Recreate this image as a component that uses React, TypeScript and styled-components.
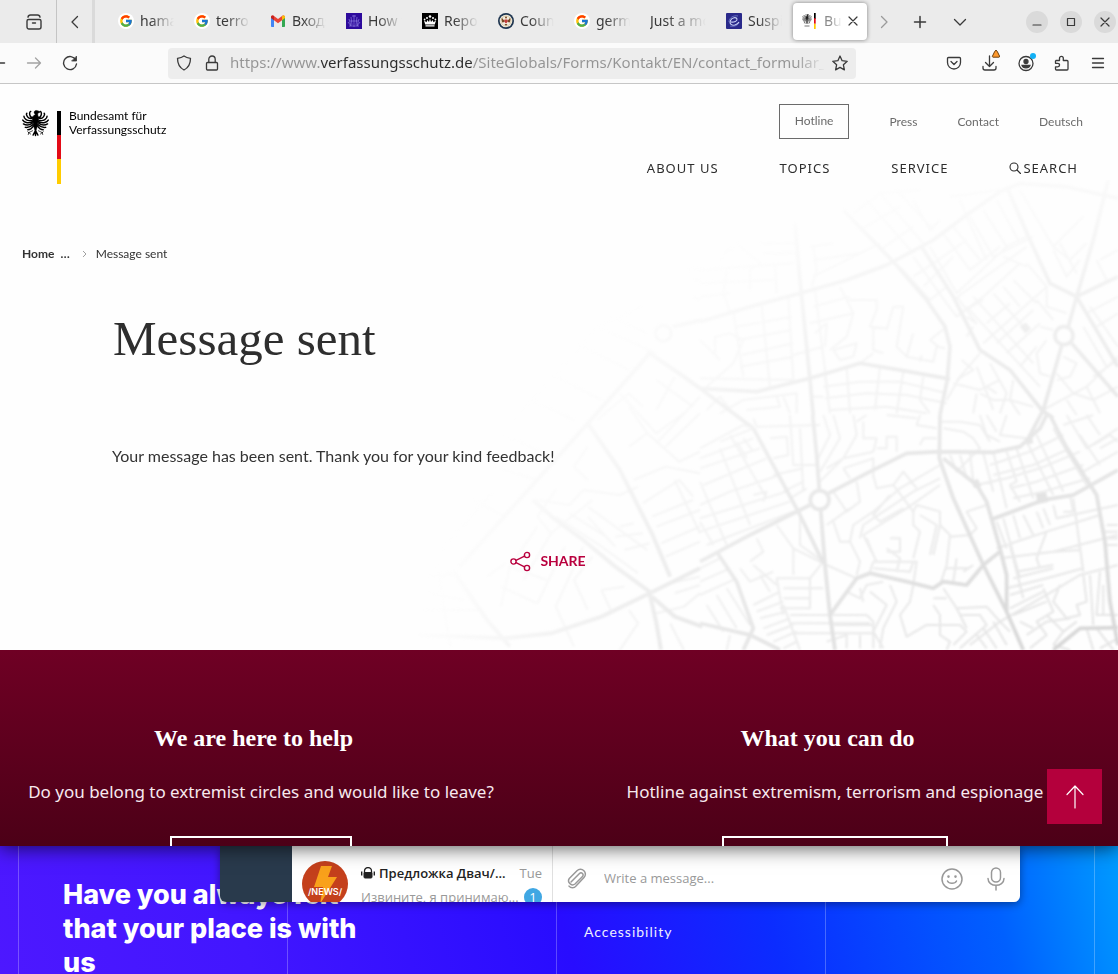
import React from 'react';
import styled, { createGlobalStyle, css } from 'styled-components';
import { FcGoogle } from 'react-icons/fc';

const ui = '"Noto Sans", "Open Sans", sans-serif';
const humanist = 'Lato, "Open Sans", sans-serif';
const serif = '"Liberation Serif", serif';

const GlobalStyle = createGlobalStyle`
  * { box-sizing: border-box; }
  body { margin: 0; font-family: ${ui}; }
  h1, h2, p, ul, ol { margin: 0; padding: 0; }
  ul, ol { list-style: none; }
  a { color: inherit; text-decoration: none; }
  button { font: inherit; color: inherit; border: 0; padding: 0; background: none; cursor: pointer; }
  svg { display: block; flex: none; }
`;

const Desktop = styled.div`
  display: flex;
  flex-direction: column;
  height: 100vh;
  overflow: hidden;
`;

const BrowserWindow = styled.div`
  position: relative;
  z-index: 2;
  flex: none;
  background: #fefefe;
  box-shadow: 0 2px 18px rgba(0, 0, 0, 0.65);
`;

/* ---------- tab strip ---------- */

const TabStrip = styled.div`
  display: flex;
  align-items: center;
  height: 43px;
  background: #ebebeb;
  color: #3a3a3a;
`;

const IconButton = styled.button<{ $w?: number; $dim?: boolean }>`
  display: flex;
  align-items: center;
  justify-content: center;
  flex: none;
  width: ${(p) => p.$w ?? 36}px;
  height: 32px;
  opacity: ${(p) => (p.$dim ? 0.45 : 1)};
`;

const StripStart = styled.div`
  display: flex;
  align-items: center;
  align-self: stretch;
  padding-left: 12px;
  border-right: 1px solid #c4c4c4;
`;

const SoftDivider = styled.div`
  align-self: stretch;
  width: 3px;
  margin-right: 13px;
  background: #dadada;
`;

const TabList = styled.div`
  display: flex;
  flex: none;
  padding-bottom: 1px;
`;

const Tab = styled.button<{ $active?: boolean }>`
  display: flex;
  align-items: center;
  gap: 6px;
  width: 74px;
  height: 37px;
  margin: 0 1px;
  padding: 0 9px;
  border-radius: 4px;
  font-size: 14px;
  line-height: 20px;
  text-align: left;
  overflow: hidden;
  ${(p) =>
    p.$active &&
    css`
      background: #ffffff;
      box-shadow: 0 0 4px rgba(0, 0, 0, 0.45);
      color: #8a8a8a;

      svg:last-child {
        color: #3a3a3a;
      }
    `}
`;

const TabTitle = styled.span`
  flex: 1;
  min-width: 0;
  overflow: hidden;
  white-space: nowrap;
  mask-image: linear-gradient(90deg, #000 30%, transparent 100%);
`;

const Spacer = styled.div`
  flex: 1;
`;

const WindowControls = styled.div`
  display: flex;
  gap: 12px;
  padding-right: 2px;
`;

const WindowButton = styled.button`
  display: grid;
  place-items: center;
  width: 22px;
  height: 22px;
  border-radius: 50%;
  background: #dadada;
`;

/* ---------- toolbar ---------- */

const Toolbar = styled.div`
  display: flex;
  align-items: center;
  height: 41px;
  border-bottom: 1px solid #c6c6c6;
  background: #fbfbfb;
  color: #3a3a3a;
`;

const NavButtons = styled.div`
  display: flex;
  width: 168px;
`;

const UrlBar = styled.div`
  display: flex;
  align-items: center;
  flex: 1;
  min-width: 0;
  height: 31px;
  padding-left: 2px;
  border-radius: 4px;
  background: #ededed;
`;

const UrlInput = styled.input`
  flex: 1;
  min-width: 0;
  height: 28px;
  margin-left: 4px;
  padding: 0 0 2px;
  border: 0;
  outline: 0;
  font: 15px ${ui};
  color: transparent;
  background: linear-gradient(
    90deg,
    #949494 0 91px,
    #2b2b2b 91px 243px,
    #949494 243px 565px,
    transparent 596px
  );
  background-clip: text;
  -webkit-background-clip: text;
`;

const ToolButtons = styled.div`
  display: flex;
  padding: 0 2px 0 80px;
`;

/* ---------- page ---------- */

const Page = styled.main`
  position: relative;
  padding-bottom: 77px;
  overflow: hidden;
  color: #333;
`;

const MapArt = styled.svg`
  position: absolute;
  right: 0;
  bottom: 0;
  width: 710px;
  height: 470px;
`;

const PageBody = styled.div`
  position: relative;
`;

const SiteHeader = styled.header`
  display: flex;
  justify-content: space-between;
  padding: 20px 35px 0 22px;
`;

const Logo = styled.a`
  display: flex;
  align-items: flex-start;
  padding-top: 5px;
  color: #000;
  font: 12px/14px ${humanist};
`;

const FlagBar = styled.span`
  width: 4px;
  height: 73px;
  margin: 2px 8px 0;
  background: linear-gradient(#000 33%, #e30b17 33% 66%, #fc0 66%);
`;

const HeaderNav = styled.div`
  display: flex;
  flex-direction: column;
  align-items: flex-end;
  gap: 18px;
`;

const MetaList = styled.ul`
  display: flex;
  align-items: center;
  gap: 40px;
  font: 12px/20px ${humanist};
  color: #6b6b6b;
`;

const HotlineLink = styled.a`
  display: block;
  padding: 6px 15px 7px;
  border: 1px solid #6b6b6b;
`;

const MainList = styled.ul`
  display: flex;
  gap: 61px;
  padding-right: 5px;
  font: 13px/22px ${ui};
  letter-spacing: 1px;
  color: #2d2d2d;
`;

const SearchLink = styled.a`
  display: flex;
  align-items: center;
  gap: 2px;
`;

const Breadcrumb = styled.ol`
  display: flex;
  align-items: center;
  gap: 8px;
  padding: 60px 22px 0;
  font: 12px/20px ${humanist};
  color: #333;

  svg {
    color: #888;
  }
`;

const CrumbLink = styled.a`
  display: flex;
  gap: 6px;
  padding-right: 4px;
  font-weight: 700;
`;

const Title = styled.h1`
  padding: 45px 113px 0;
  font: 400 49px/60px ${serif};
  color: #2e2e2e;
`;

const Message = styled.p`
  padding: 75px 112px 0;
  font: 16px/24px ${humanist};
`;

const ShareRow = styled.div`
  display: flex;
  justify-content: center;
  padding: 81px 22px 0 0;
`;

const ShareButton = styled.button`
  display: flex;
  align-items: center;
  gap: 9px;
  font: bold 14px/24px ${humanist};
  color: #b9003e;
`;

const HelpSection = styled.section`
  position: relative;
  display: grid;
  grid-template-columns: 1fr 1fr;
  gap: 52px;
  height: 196px;
  padding: 70px 22px 0 0;
  overflow: hidden;
  background: linear-gradient(#6f0024, #4c0017);
  color: #fff;
`;

const HelpColumn = styled.div`
  display: flex;
  flex-direction: column;
  align-items: center;

  h2 {
    padding-right: 15px;
    font: bold 24px/36px ${serif};
  }

  p {
    padding-top: 22px;
    font: 17px/28px ${ui};
    white-space: nowrap;
    color: #f7e9ee;
  }
`;

const OutlineLink = styled.a<{ $w: number }>`
  flex: none;
  width: ${(p) => p.$w}px;
  height: 48px;
  margin-top: 30px;
  border: 2px solid #fff;
`;

const ToTopButton = styled.button`
  position: absolute;
  right: 16px;
  bottom: 22px;
  display: grid;
  place-items: center;
  width: 55px;
  height: 55px;
  background: #b4003c;
`;

/* ---------- windows behind ---------- */

const Backdrop = styled.section`
  position: relative;
  flex: 1;
  display: flex;
  align-items: flex-start;
  padding: 32px 63px 0;
  color: #fff;
  background:
    repeating-linear-gradient(90deg, transparent 0 18px, rgba(255, 255, 255, 0.25) 18px 19px, transparent 19px 269px),
    linear-gradient(75deg, #4d18ff 0%, #4216ff 22%, #280cff 50%, #0b2cff 68%, #0060ff 88%, #009cff 100%);
`;

const Slogan = styled.p`
  flex: none;
  width: 521px;
  padding-right: 200px;
  font: 800 27px/34px Inter, sans-serif;
`;

const FooterLink = styled.a`
  padding-top: 43px;
  font: 14px/22px ${humanist};
  letter-spacing: 1px;
  color: #eef;
`;

const ChatWindow = styled.div`
  position: absolute;
  z-index: 1;
  top: 0;
  left: 220px;
  right: 98px;
  display: flex;
  height: 56px;
  overflow: hidden;
  border-radius: 0 0 6px 6px;
  background: #fff;
  box-shadow: 0 2px 8px rgba(0, 0, 0, 0.4);
  font-family: "Open Sans", sans-serif;
  font-size: 13px;
  line-height: 24px;
`;

const ChatRail = styled.div`
  flex: none;
  width: 72px;
  background: #293a4c;
`;

const ChatItem = styled.div`
  display: flex;
  flex: none;
  align-items: flex-start;
  gap: 13px;
  width: 261px;
  padding: 15px 10px 0;
  border-right: 1px solid #e0e0e0;
`;

const ChatLines = styled.div`
  flex: 1;
  min-width: 0;
`;

const ChatLine = styled.div<{ $muted?: boolean }>`
  display: flex;
  align-items: center;
  gap: 4px;
  color: ${(p) => (p.$muted ? '#999' : '#222')};
  white-space: nowrap;

  b {
    flex: 1;
    font-weight: 600;
  }

  span {
    flex: 1;
  }

  time {
    color: #999;
  }
`;

const Badge = styled.em`
  width: 18px;
  height: 18px;
  border-radius: 9px;
  background: #40a7e3;
  color: #fff;
  font-style: normal;
  line-height: 18px;
  text-align: center;
`;

const Composer = styled.div`
  display: flex;
  flex: 1;
  align-items: center;
  padding: 10px 12px 0 13px;
  color: #999;
`;

const ComposerInput = styled.input`
  flex: 1;
  min-width: 0;
  margin-left: 16px;
  padding: 0 0 2px;
  border: 0;
  outline: 0;
  font: 13px "Open Sans", sans-serif;

  &::placeholder {
    color: #999;
    opacity: 1;
  }
`;

const ComposerTools = styled.div`
  display: flex;
  gap: 20px;
`;

/* ---------- icons ---------- */

const Line = ({
  d,
  size = 16,
  w = 1.3,
  children,
}: {
  d?: string;
  size?: number;
  w?: number;
  children?: React.ReactNode;
}) => (
  <svg
    width={size}
    height={size}
    viewBox={`0 0 ${size} ${size}`}
    fill="none"
    stroke="currentColor"
    strokeWidth={w}
    strokeLinecap="round"
    strokeLinejoin="round"
    aria-hidden="true"
  >
    {d && <path d={d} />}
    {children}
  </svg>
);

const GoogleMark = () => (
  <svg width="16" height="16" viewBox="0 0 16 16" aria-hidden="true">
    <circle cx="8" cy="8" r="8" fill="#fff" />
    <FcGoogle x={1} y={1} size={14} />
  </svg>
);

const GmailMark = () => (
  <svg width="16" height="16" viewBox="0 0 16 16" aria-hidden="true">
    <path d="M1 4v9.2c0 .5.3.8.8.8H4V6z" fill="#4285f4" />
    <path d="M15 4v9.2c0 .5-.3.8-.8.8H12V6z" fill="#34a853" />
    <path d="M1 4.200C1 2.300 2.800 2 4 2.900L8 6l4-3.100c1.200-.9 3-.6 3 1.300L12 7.200 8 10.200 4 7.200z" fill="#ea4335" />
    <path d="M12 3v4.200L15 5V4c0-1.700-1.700-2-3-1z" fill="#fbbc04" />
    <path d="M4 3v4.200L1 5V4c0-1.700 1.700-2 3-1z" fill="#c5221f" />
  </svg>
);

const CrestMark = () => (
  <svg width="16" height="16" viewBox="0 0 16 16" aria-hidden="true">
    <path d="M0 0h16v16H0z" fill="#2d0a9c" />
    <path
      d="M8 2v12M5 4l1 8M11 4l-1 8M3 6l2 7M13 6l-2 7M2 9l3 4M14 9l-3 4M3 13h10M6 3h4M4 8h8"
      stroke="#8d7be0"
      strokeWidth=".7"
      fill="none"
    />
  </svg>
);

const CrownMark = () => (
  <svg width="16" height="16" viewBox="0 0 16 16" fill="#fff" aria-hidden="true">
    <path d="M0 0h16v16H0z" fill="#000" />
    <path d="M3.500 13.500h9v-1.200h-9zM3.200 11.500 2 7.500l2.600 1.800.6-2.300 1.800 2L8 5.500 9 9l1.800-2 .6 2.300L14 7.500l-1.200 4z" />
    <circle cx="8" cy="3.500" r="1.300" />
    <circle cx="5" cy="5" r="1" />
    <circle cx="11" cy="5" r="1" />
    <circle cx="2.600" cy="6.500" r=".9" />
    <circle cx="13.400" cy="6.500" r=".9" />
  </svg>
);

const SealMark = () => (
  <svg width="16" height="16" viewBox="0 0 16 16" aria-hidden="true">
    <circle cx="8" cy="8" r="8" fill="#1e3550" />
    <circle cx="8" cy="8" r="6.300" fill="#f4eee0" />
    <circle cx="8" cy="8" r="5" fill="none" stroke="#c9b98f" strokeWidth=".6" />
    <path d="M4 4.500c.3 1.500 1.500 2.500 2.700 2.700L6.500 9 4.300 9.500C3.500 8 3.300 6 4 4.500zM12 4.500c-.3 1.500-1.500 2.500-2.700 2.700L9.500 9l2.200.5C12.500 8 12.700 6 12 4.500zM6.500 11h3L8 13z" fill="#7a4a26" />
    <circle cx="8" cy="4.500" r="1" fill="#7a4a26" />
    <path d="M6.500 6.500h3V9L8 10.500 6.500 9z" fill="#c43b3b" />
  </svg>
);

const EuropolMark = () => (
  <svg width="16" height="16" viewBox="0 0 16 16" fill="none" aria-hidden="true">
    <rect width="16" height="16" rx="1" fill="#29298a" />
    <path d="M5 9c3 .5 6.500-1 6-3S6 4 4.500 7.500 6 13 9 12s4-3 4-3" stroke="#c9d2f5" strokeWidth="1.100" />
    <path d="M3 9C3 5 7 2 12 3M4 13c3 1 7 0 9-3" stroke="#7f8bd6" strokeWidth=".7" />
  </svg>
);

const EagleShape = ({ color }: { color: string }) => (
  <g fill="none" stroke={color} strokeLinecap="round">
    <path d="M14 5c-2.500-1.500-1.500-4 1-4 1.500 0 2.500 1 4 1.500-1 .8-2 .7-2.500 1.500C16 6 17 7 17 10l-1 7-2 6-2-6-1-7c0-2 .5-3 1.500-4z" fill={color} strokeWidth=".5" />
    <path d="M11 8C8 9 7 3 9 2M11 9C6 11 4 5 5 4M11 11C5 13 2 9 2 7M11 12.500C6 15 2 13 .8 11M11 14c-4 3-7 2.500-9.500 1M11.500 15.500C8 19 6 19 3.500 18.500M12 17c-2 3-4 4-6 4" strokeWidth="1.500" />
    <path d="M17 8c3 1 4-5 2-6M17 9c5 2 7-4 6-5M17 11c6 2 9-2 9-4M17 12.500c5 2.500 9 .5 10.200-1.500M17 14c4 3 7 2.500 9.500 1M16.500 15.500C20 19 22 19 24.500 18.500M16 17c2 3 4 4 6 4" strokeWidth="1.500" />
    <path d="M14 20v7M14 22l-2.500 4.500M14 22l2.500 4.500" strokeWidth="1.500" />
    <path d="M11 22l-4 2m0 0-1-1m1 1-.5 2m.5-2 2 1.500M17 22l4 2m0 0 1-1m-1 1 .5 2m-.5-2-2 1.500" strokeWidth=".7" />
  </g>
);

const BundesMark = () => (
  <svg width="16" height="16" viewBox="0 0 16 16" aria-hidden="true">
    <svg x="0" y="1" width="10" height="10" viewBox="0 0 28 28">
      <EagleShape color="#222" />
    </svg>
    <path d="M2.500 13h5" stroke="#777" strokeWidth="1.200" />
    <path d="M12 0h1.700v6H12z" fill="#000" />
    <path d="M12 5.300h1.700v5.400H12z" fill="#e30b17" />
    <path d="M12 10.700h1.700V16H12z" fill="#fc0" />
  </svg>
);

/* ---------- street map ---------- */

const westMain =
  'M40 1365 230 1375 330 1360 440 1310 545 1240 655 1165M130 1160 260 960 410 730 520 560 545 520M595 440 660 420M410 730 480 870 550 1060 590 1190M545 1240 560 1330 570 1410M545 1235 470 1160 400 1080 340 1020 290 960M550 1250 600 1310 660 1340M540 515 620 590 655 625M150 1240 190 1320 240 1400M150 1240 120 1180 60 1190';
const westMinor =
  'M60 1080 130 900 260 700 400 490M90 1110 200 940M180 850 300 900 260 960M220 760 330 830M270 650 380 720M310 570 440 660M370 480 500 570M400 490 430 440 530 380M430 440 560 520M460 410 540 460M160 960 230 1010M340 930 300 1010 330 1060 420 960M300 960 370 975 400 930 480 945 520 920M410 800 380 860 410 900M500 680 540 760 610 845 655 815M430 720 500 640 530 680M480 640 560 760 620 700M540 760 500 800M560 600 640 680M560 790 655 650M580 800 655 700M600 590 560 690M510 900 580 860 655 880M530 970 610 900 640 950M550 1010 640 960M560 1040 655 990M570 1090 655 1040M580 1130 655 1085M600 900 655 1060M340 1010 430 1090 520 1180M370 1000 450 1070M410 980 540 1110M300 1040 240 1160 220 1280M330 1060 270 1200M360 1100 300 1270M400 1100 340 1280 380 1400M420 1130 380 1200 410 1290M440 1230 490 1220M440 1230 460 1290M480 1410 520 1330 500 1290M560 1300 620 1280 655 1240M590 1210 655 1190M600 1240 655 1215M590 1330 620 1410M240 1160 320 1200M220 1220 300 1270M190 1190 230 1150M60 1240 140 1260M50 1290 170 1290M80 1150 110 1400M410 1010 470 1100M480 1040 510 1030M470 1070 530 1060M490 1110 545 1090M630 270 655 265M640 300 655 300M640 350 655 360';
const northMain =
  'M0 425 150 380 300 340 440 300 560 255 700 180 800 105 900 35 960 10 1100 20 1254 55M285 130 300 300 315 450 330 600 340 710M0 625 170 635 330 595 480 550 610 572 750 597M430 90 580 245 680 360 735 440 750 500 742 600 720 705M1254 290 1130 350 1050 310 990 180 920 20M1225 0 1180 180 1130 350 1105 440M1085 497 1030 690 985 775M1115 490 1254 650M665 200 760 350 840 510 930 570 1025 690 1060 715M1130 350 1254 560M0 625 100 700 160 745';
const northMinor =
  'M100 395 130 590M185 375 210 620M265 350 280 600M110 440 275 410M115 480 275 450M125 525 280 490M120 560 280 530M0 595 280 600M20 620 100 550 130 480 90 460M0 480 40 520 60 540M45 520V470L90 460M0 270 280 250M0 310 220 300M0 350 90 340M90 395 70 340 80 270M110 190 180 250 150 270 150 330M180 190H290M190 220H290M225 250 230 340M100 200 60 240M330 200 400 190M340 240 480 220M340 290 540 190M335 320 350 270 340 200M345 330 385 650M340 380 450 350M330 430 460 400M420 320 460 400 440 470 390 510M345 460 380 430 375 500M440 360H530V390L510 440 560 445M520 440 520 510 550 520M560 450 580 380 610 380 590 500 620 530 640 460M620 530 700 545 710 500 735 505M660 545 665 525M400 510 470 490 460 530 420 540 400 510M480 550 520 520M370 500 280 525M330 650 370 650M370 620 480 605 600 605 740 640M375 655 500 640 620 645 740 670M390 690 560 680 680 700M375 590 390 700M440 560 450 700M540 560 525 690M610 575 590 700M670 590 660 660 690 700M500 60 640 220M540 40 670 190M590 30 700 150M460 100 540 40 660 30M480 150 600 80M540 210 640 140M640 60 690 150 720 120M780 60 800 110 860 240M750 50 900 30M810 110 880 230 1000 170M850 90 920 200M890 60 960 190M930 50 1050 310M960 30 1060 200 1150 110M730 160 810 270 900 200M760 140 840 240M640 230 740 370M690 200 770 340 920 200 980 170M600 260 690 360 740 320M640 290 700 250 800 180M670 320 760 230M760 360 980 200M770 350 830 430 800 410M740 370 770 410 850 350 960 250M850 490 1040 320M820 350 1000 550M800 380 1020 620M780 400 850 360M880 340 980 450M910 320 960 380M940 300 1010 370M860 430 930 370M890 490 1000 390M920 520 1020 430M960 560 1010 500M980 250 1040 320 1040 380 1100 400M910 230 980 260M1060 200 1110 240 1160 190M1080 190 1130 280M1060 210 1100 290 1140 240M1200 240 1254 210M1190 240 1220 300M1010 360 1060 420M1040 480 1010 520 1020 580 1050 590M1060 450 1020 440M1170 380 1254 500M1160 400 1254 350M1190 440 1254 400M1150 440 1220 560 1254 540M1180 590 1254 540M1090 530 1130 550 1110 590 1070 600M1070 580 1120 640M1030 690 1160 620 1254 530M1120 640 1180 660 1254 620M1100 660 1130 705M1160 620 1200 700M840 520 780 590 740 660M785 540 820 570 770 600M760 610 840 630 900 600M830 560 880 690M870 550 920 640 900 700M830 640 820 700M840 640 880 660 930 660 1000 680M860 620 890 640M940 600 930 660 960 705M20 690 60 650 100 700M60 700 130 660 290 640V700M140 690 240 680 230 650M250 650 270 700M800 470 820 440M690 480 740 440M690 480 715 500';
const southMain =
  'M0 440 150 360 330 270M385 235 510 170 620 115 720 110 880 112 960 95 1020 40 1040 0M338 0 350 120 358 225M362 285 375 450 390 600 405 705M720 0 718 130 760 250 850 450 920 590 970 705M730 130 830 210 860 260 900 400 920 480 920 590M870 315 1030 255 1120 240 1254 165M1050 0 1100 100 1190 240 1215 380 1230 560 1254 690M390 600 470 490 510 475 620 500 700 520 730 500 800 510 850 450 900 410M0 625 150 660 240 705M50 410 110 500 160 640 130 705M160 40 230 170 300 300 370 445M1060 705 1140 640 1254 638';
const southMinor =
  'M0 100 130 30 160 40 60 80M0 130 160 70M0 160 180 100M10 210 200 130M0 270 90 230 240 180M0 310 260 230M0 350 270 260M20 390 280 290M60 100 150 330M90 60 200 250M0 200 80 390M110 80 140 130M130 70 160 110M160 240 200 230 190 260M0 320 40 390M160 10 170 35 360 30M270 0 280 150 350 150M300 40 310 230M210 70 260 65 265 120 220 130M220 180 310 160M250 230 310 200M270 250 320 220M370 0 390 60 350 140M400 0 420 70 360 170M460 0 470 60 430 130 380 160M360 200 430 130 520 110M430 160 450 190M430 160 520 130 520 190M490 20 490 70 530 70 520 110M530 100 560 100V65H590V110M660 0 650 30 710 40M660 90 670 70H710M400 230 440 290 480 260 470 200M380 330 450 280M400 320 420 380 450 380 480 440 470 480M450 380 460 330 520 290 600 220 720 150M480 370 490 330 640 230 720 190M490 360 620 280 720 210M520 180 530 220 580 210 610 170 650 220M580 210 640 290 650 270 720 290V330L750 360 740 450 720 510M640 290 640 330 660 350 640 430M690 420 710 330 660 300M720 330 700 420M610 280 540 320 520 300 570 240M490 360 530 440M500 370 520 420M520 440 650 440 640 510M510 470 520 440M520 460 630 470 640 440M570 370H600V410H560M560 400 600 430 590 470M740 460H810M770 430 760 500M790 470 820 450M750 365 810 360 830 340 800 290 860 270M380 450 470 490M370 445 280 400 280 480M300 300 300 390 370 440 330 490 230 490 250 600M250 520H370M250 550H330M240 580H330V490M270 600H500L520 620V700M270 625H510M280 655H520M380 680 440 660V700M480 660V700M400 630H520M440 530 480 550 500 510 550 500M480 520 490 560M510 530 560 570 520 650 550 700M570 510 590 560 550 640 540 700M640 510 630 560 600 600 620 665 680 630 780 630 800 650 760 690M730 520 770 580 800 640M700 550H740M700 570 720 600 720 660 750 680 740 705M770 580 860 575 900 620 930 650M780 600H840L860 630 780 700M830 660 860 700M850 640 890 700M880 620 920 690M810 690 900 620 1040 540 1140 480 1254 450M230 330 280 400M170 370 190 410 150 440M120 460 150 500 220 470M60 430 0 460M0 500 90 460M0 540 110 490M20 570 70 650M50 540 110 640M80 520 150 630M160 450 230 510M180 480 210 530M160 570 240 530M170 590 250 560M180 610 260 590M190 640 270 610M200 660 280 630M220 680 290 650M250 700 290 680M90 660 80 705M250 570 300 705M750 120 770 170 840 100 820 70 790 50 730 40M720 20H780L840 30 870 80M840 0 860 60 900 80M860 0 890 50M920 0 900 60 980 70M780 120 800 190M810 115 820 200M850 115 880 230M880 110 920 280M920 110 950 200 930 210 960 260M950 100 1000 250M980 80 1060 240M1010 60 1090 230M1060 40 1160 210M870 150 990 110 1090 60M880 180 1000 150 1110 100M830 210 920 190 1020 160 1140 110M930 220 1010 200 1150 150M940 250 1030 230 1170 190M1080 60 1150 170 1254 110M1090 30 1180 0M1100 0 1160 100 1254 40M1140 60 1200 150M1180 90 1230 60 1254 80M1200 60 1160 0M1200 100 1254 70M890 320 920 400M910 310 960 490M940 300 960 370M970 300 1000 360M1010 290 1030 340M1030 280 1050 330M1060 270 1070 310 1254 270M1090 290 1120 290 1110 240M1120 250 1150 470M890 400 1040 350 1200 300M900 430 1060 410 1254 360M1040 350 1010 430 1020 460M930 390 950 470 1060 450M940 490 1060 460M920 520 1040 490 1150 460M930 540 1030 510M950 470 970 550M1060 410 1140 405M930 580 1030 530M940 600 1040 560M1030 520 1060 590 1010 620 1040 660 990 700M960 620 1000 640M1080 510 1060 560 1100 610 1140 600 1130 570 1160 560 1150 480M1170 480 1180 630M1200 470 1190 600H1254M1210 510V600M1040 600 1090 650 1060 690M980 660 1040 620 1110 610M1160 640 1180 705M1190 640 1240 705M1200 700 1254 670M1220 330H1254M1215 350H1254M1220 370H1254M1220 390H1254M1060 690 1110 705M1090 650 1130 620M500 0 470 20M560 0 650 10';

const StreetMap = () => (
  <MapArt viewBox="408 180 710 470" aria-hidden="true">
    <defs>
      <radialGradient id="fade" gradientUnits="userSpaceOnUse" cx="1080" cy="830" r="700">
        <stop offset="0.25" stopColor="#fff" />
        <stop offset="0.5" stopColor="#fff" stopOpacity="0.66" />
        <stop offset="0.75" stopColor="#fff" stopOpacity="0.34" />
        <stop offset="1" stopColor="#fff" stopOpacity="0" />
      </radialGradient>
      <mask id="mapMask" maskUnits="userSpaceOnUse" x="400" y="170" width="730" height="490">
        <rect x="400" y="170" width="730" height="490" fill="url(#fade)" />
      </mask>
      <filter id="soft" filterUnits="userSpaceOnUse" x="400" y="170" width="740" height="500">
        <feGaussianBlur stdDeviation="0.9" />
      </filter>
    </defs>
    <g mask="url(#mapMask)">
      <g fill="none" stroke="#d6d6d6" strokeLinejoin="round" filter="url(#soft)">
        <g transform="translate(400 180) scale(0.4579 0.3333)">
          <path d={westMinor} strokeWidth="2" stroke="#e4e4e4" vectorEffect="non-scaling-stroke" />
          <path d={westMain} strokeWidth="4" vectorEffect="non-scaling-stroke" />
          <ellipse cx="575" cy="460" rx="17" ry="24" strokeWidth="3" vectorEffect="non-scaling-stroke" />
        </g>
        <g transform="translate(700 180) scale(0.3333)">
          <path d={northMinor} strokeWidth="6" stroke="#e4e4e4" />
          <path d={northMain} strokeWidth="11" />
          <circle cx="1092" cy="467" r="27" strokeWidth="11" />
          <path d="M960 440l18-12 14 18-16 14z" fill="#d6d6d6" />
        </g>
        <g transform="translate(700 415) scale(0.3333)">
          <path d={southMinor} strokeWidth="6" stroke="#e3e3e3" />
          <path d={southMain} strokeWidth="11" />
          <circle cx="359" cy="255" r="28" strokeWidth="11" />
          <path d="M1008 238l30-6 6 28-30 6zM815 200l18-8 10 22-20 4zM975 70l20-6 4 20-18 4z" fill="#d6d6d6" />
        </g>
      </g>
    </g>
  </MapArt>
);

/* ---------- data ---------- */

const tabs: { title: string; icon?: React.ReactNode }[] = [
  { title: 'hamas', icon: <GoogleMark /> },
  { title: 'terror', icon: <GoogleMark /> },
  { title: 'Входящие', icon: <GmailMark /> },
  { title: 'How to', icon: <CrestMark /> },
  { title: 'Report', icon: <CrownMark /> },
  { title: 'Count', icon: <SealMark /> },
  { title: 'germa', icon: <GoogleMark /> },
  { title: 'Just a mom' },
  { title: 'Suspi', icon: <EuropolMark /> },
];

export default function App() {
  return (
    <Desktop>
      <GlobalStyle />
      <BrowserWindow>
        <TabStrip>
          <StripStart>
            <IconButton $w={44} aria-label="Recent windows">
              <Line d="M2.500 5.500h11a1.500 1.500 0 0 1 1.500 1.500v6a2 2 0 0 1-2 2H3a2 2 0 0 1-2-2V7a1.500 1.500 0 0 1 1.500-1.500zM2 3.200A2.500 2.500 0 0 1 4.500 1h7A2.500 2.500 0 0 1 14 3.200M6.500 9h3" w={1.4} />
            </IconButton>
          </StripStart>
          <IconButton $w={35} aria-label="Scroll tabs left">
            <Line d="M10.500 2.500 5 8l5.500 5.500" />
          </IconButton>
          <SoftDivider />
          <TabList role="tablist">
            {tabs.map((t) => (
              <Tab key={t.title} role="tab">
                {t.icon}
                <TabTitle>{t.title}</TabTitle>
              </Tab>
            ))}
            <Tab $active role="tab" aria-selected="true">
              <BundesMark />
              <TabTitle>Bundes</TabTitle>
              <Line size={10} d="M1 1l8 8M9 1 1 9" w={1.2} />
            </Tab>
          </TabList>
          <IconButton $w={32} $dim aria-label="Scroll tabs right">
            <Line d="M5.500 2.500 11 8l-5.500 5.500" />
          </IconButton>
          <IconButton $w={40} aria-label="New tab">
            <Line d="M8 2.500v11M2.500 8h11" w={1.5} />
          </IconButton>
          <IconButton $w={40} aria-label="List all tabs">
            <Line d="M2.500 5.500 8 11l5.500-5.500" />
          </IconButton>
          <Spacer />
          <WindowControls>
            <WindowButton aria-label="Minimize">
              <Line size={10} d="M1 8h8" w={1.2} />
            </WindowButton>
            <WindowButton aria-label="Maximize">
              <Line size={10} d="M1.500 1.500h7v7h-7z" w={1.2} />
            </WindowButton>
            <WindowButton aria-label="Close">
              <Line size={10} d="M1 1l8 8M9 1 1 9" w={1.2} />
            </WindowButton>
          </WindowControls>
        </TabStrip>

        <Toolbar>
          <NavButtons>
            <IconButton $w={16} aria-label="Back">
              <Line d="M-4 8h8.500" w={1.5} />
            </IconButton>
            <IconButton $dim aria-label="Forward">
              <Line d="M1.500 8h13M9.500 3l5 5-5 5" />
            </IconButton>
            <IconButton aria-label="Reload">
              <Line w={1.4}>
                <path d="M13.800 5A6.500 6.500 0 1 0 14.500 9" />
                <path d="M14.500 1.500V6H10z" fill="currentColor" strokeWidth=".8" />
              </Line>
            </IconButton>
          </NavButtons>
          <UrlBar>
            <IconButton $w={28} aria-label="Tracking protection">
              <Line d="M8 1c2 1.500 4 2 6.500 2.300C14.500 9 13 12.500 8 15 3 12.500 1.500 9 1.500 3.300 4 3 6 2.500 8 1z" />
            </IconButton>
            <IconButton $w={28} aria-label="Connection secure">
              <Line d="M3.500 7.500h9a1 1 0 0 1 1 1V14a1 1 0 0 1-1 1h-9a1 1 0 0 1-1-1V8.500a1 1 0 0 1 1-1zM4.800 7.500V4.200a3.200 3.200 0 0 1 6.400 0v3.300" />
            </IconButton>
            <UrlInput
              aria-label="Address"
              defaultValue="https://www.verfassungsschutz.de/SiteGlobals/Forms/Kontakt/EN/contact_formular_en.html"
            />
            <IconButton $w={32} aria-label="Bookmark this page">
              <Line d="M8 1l2.100 4.700 5.100.6-3.800 3.500 1 5.100L8 12.400l-4.400 2.500 1-5.100L.8 6.300l5.100-.6z" />
            </IconButton>
          </UrlBar>
          <ToolButtons>
            <IconButton aria-label="Save to Pocket">
              <Line d="M2.500 2.500h11a1 1 0 0 1 1 1V7.500a6.500 6.500 0 0 1-13 0V3.500a1 1 0 0 1 1-1zM5 6.500l3 3 3-3" />
            </IconButton>
            <IconButton aria-label="Downloads">
              <svg width="20" height="26" viewBox="0 0 20 26" fill="none" stroke="currentColor" strokeWidth="1.300" strokeLinecap="round" strokeLinejoin="round">
                <path d="M9.500 6v10.500M5.500 12.500l4 4 4-4M3 16.500V18a2 2 0 0 0 2 2h9a2 2 0 0 0 2-2v-1.500" />
                <path d="M16 .5c.5 0 1 .4 1.300 1l2.200 4.500c.3.700 0 1.200-.6 1.200h-5.800c-.6 0-.9-.5-.6-1.200l2.200-4.500c.3-.6.800-1 1.300-1z" fill="#ff9a2e" stroke="#5a3000" strokeWidth=".9" />
              </svg>
            </IconButton>
            <IconButton aria-label="Account">
              <svg width="20" height="20" viewBox="0 0 20 20" fill="none" stroke="currentColor" strokeWidth="1.300">
                <circle cx="10" cy="10.500" r="7" />
                <circle cx="10" cy="8.500" r="2" fill="currentColor" />
                <path d="M6 12.300h8c-.5 1.700-2.300 2.500-4 2.500s-3.500-.8-4-2.500z" fill="currentColor" />
                <circle cx="17" cy="3" r="3" fill="#12b0f5" stroke="none" />
              </svg>
            </IconButton>
            <IconButton aria-label="Extensions">
              <Line d="M2 5.500h3.500V3.200a1.900 1.900 0 0 1 3.800 0v2.300H13a1 1 0 0 1 1 1V14a1 1 0 0 1-1 1H2.500a1 1 0 0 1-1-1v-2.200h2.300a1.700 1.700 0 0 0 0-3.500H1.500V6" />
            </IconButton>
            <IconButton aria-label="Menu">
              <Line d="M2.500 3.500h11M2.500 8h11M2.500 12.500h11" />
            </IconButton>
          </ToolButtons>
        </Toolbar>

        <Page>
          <StreetMap />
          <PageBody>
            <SiteHeader>
              <Logo href="#">
                <svg width="27" height="28" viewBox="0 0 28 28" aria-hidden="true">
                  <EagleShape color="#000" />
                </svg>
                <FlagBar />
                <span>
                  Bundesamt für
                  <br />
                  Verfassungsschutz
                </span>
              </Logo>
              <HeaderNav>
                <MetaList>
                  <li>
                    <HotlineLink href="#">Hotline</HotlineLink>
                  </li>
                  <li>
                    <a href="#">Press</a>
                  </li>
                  <li>
                    <a href="#">Contact</a>
                  </li>
                  <li>
                    <a href="#">Deutsch</a>
                  </li>
                </MetaList>
                <MainList>
                  <li>
                    <a href="#">ABOUT US</a>
                  </li>
                  <li>
                    <a href="#">TOPICS</a>
                  </li>
                  <li>
                    <a href="#">SERVICE</a>
                  </li>
                  <li>
                    <SearchLink href="#">
                      <Line size={12} w={1.1}>
                        <circle cx="5" cy="5" r="4" />
                        <path d="M8 8l3.500 3.500" />
                      </Line>
                      SEARCH
                    </SearchLink>
                  </li>
                </MainList>
              </HeaderNav>
            </SiteHeader>

            <Breadcrumb>
              <li>
                <CrumbLink href="#">
                  <span>Home</span>
                  <span>…</span>
                </CrumbLink>
              </li>
              <Line size={6} d="M1 0l3 3-3 3" w={0.8} />
              <li>Message sent</li>
            </Breadcrumb>

            <Title>Message sent</Title>
            <Message>Your message has been sent. Thank you for your kind feedback!</Message>
            <ShareRow>
              <ShareButton>
                <Line size={21} w={1.4}>
                  <circle cx="3.500" cy="10.500" r="2.600" />
                  <circle cx="17" cy="4" r="2.600" />
                  <circle cx="17" cy="17" r="2.600" />
                  <path d="M6 9.300 14.500 5.200M6 11.700l8.500 4.100" />
                </Line>
                SHARE
              </ShareButton>
            </ShareRow>
          </PageBody>
        </Page>

        <HelpSection>
          <HelpColumn>
            <h2>We are here to help</h2>
            <p>Do you belong to extremist circles and would like to leave?</p>
            <OutlineLink $w={182} href="#" aria-label="We are here to help" />
          </HelpColumn>
          <HelpColumn>
            <h2>What you can do</h2>
            <p>Hotline against extremism, terrorism and espionage</p>
            <OutlineLink $w={226} href="#" aria-label="What you can do" />
          </HelpColumn>
          <ToTopButton aria-label="Back to top">
            <Line size={24} d="M12 23V1M4 9.500 12 1l8 8.500" w={1.2} />
          </ToTopButton>
        </HelpSection>
      </BrowserWindow>

      <Backdrop>
        <Slogan>Have you always felt that your place is with us</Slogan>
        <FooterLink href="#">Accessibility</FooterLink>
        <ChatWindow>
          <ChatRail />
          <ChatItem>
            <svg width="46" height="46" viewBox="0 0 46 46" aria-hidden="true">
              <circle cx="23" cy="23" r="23" fill="#c4401c" />
              <path d="M19 5h11l-4 11h9L18 43l3-17h-9z" fill="#f9a11b" />
              <text x="23" y="34" textAnchor="middle" fill="#fff" fontFamily="Inter, sans-serif" fontSize="9" fontWeight="600">
                /NEWS/
              </text>
            </svg>
            <ChatLines>
              <ChatLine>
                <svg width="14" height="12" viewBox="0 0 14 12" fill="none" stroke="#222" aria-hidden="true">
                  <path d="M3.500 5V4a3.500 3.500 0 0 1 7 0v1" strokeWidth="1.300" />
                  <path d="M3 5.500h8V10a1 1 0 0 1-1 1H4a1 1 0 0 1-1-1z" fill="#222" />
                  <path d="M.7 4.500v4M13.300 4.500v4" strokeWidth="1.400" />
                </svg>
                <b>Предложка Двач/...</b>
                <time>Tue</time>
              </ChatLine>
              <ChatLine $muted>
                <span>Извините, я принимаю...</span>
                <Badge>1</Badge>
              </ChatLine>
            </ChatLines>
          </ChatItem>
          <Composer>
            <Line size={22} w={1.5} d="M5 14l8.500-8.500a2 2 0 0 1 3 3L9 16a4 4 0 0 1-5.500-5.700L11 2.800a4.800 4.800 0 0 1 7 6.800l-8 8.500a4.500 4.500 0 0 1-7 0" />
            <ComposerInput placeholder="Write a message..." aria-label="Message" />
            <ComposerTools>
              <Line size={24} w={1.5}>
                <circle cx="12" cy="12" r="10" />
                <path d="M7.500 14c1.500 3 7.500 3 9 0" />
                <path d="M8.500 9.500v.1M15.500 9.500v.1" strokeWidth="2.600" />
              </Line>
              <Line size={24} w={1.5}>
                <rect x="7.500" y="1" width="9" height="14" rx="4.500" />
                <path d="M4 11.500c0 9 16 9 16 0M12 18.500V23" />
              </Line>
            </ComposerTools>
          </Composer>
        </ChatWindow>
      </Backdrop>
    </Desktop>
  );
}
